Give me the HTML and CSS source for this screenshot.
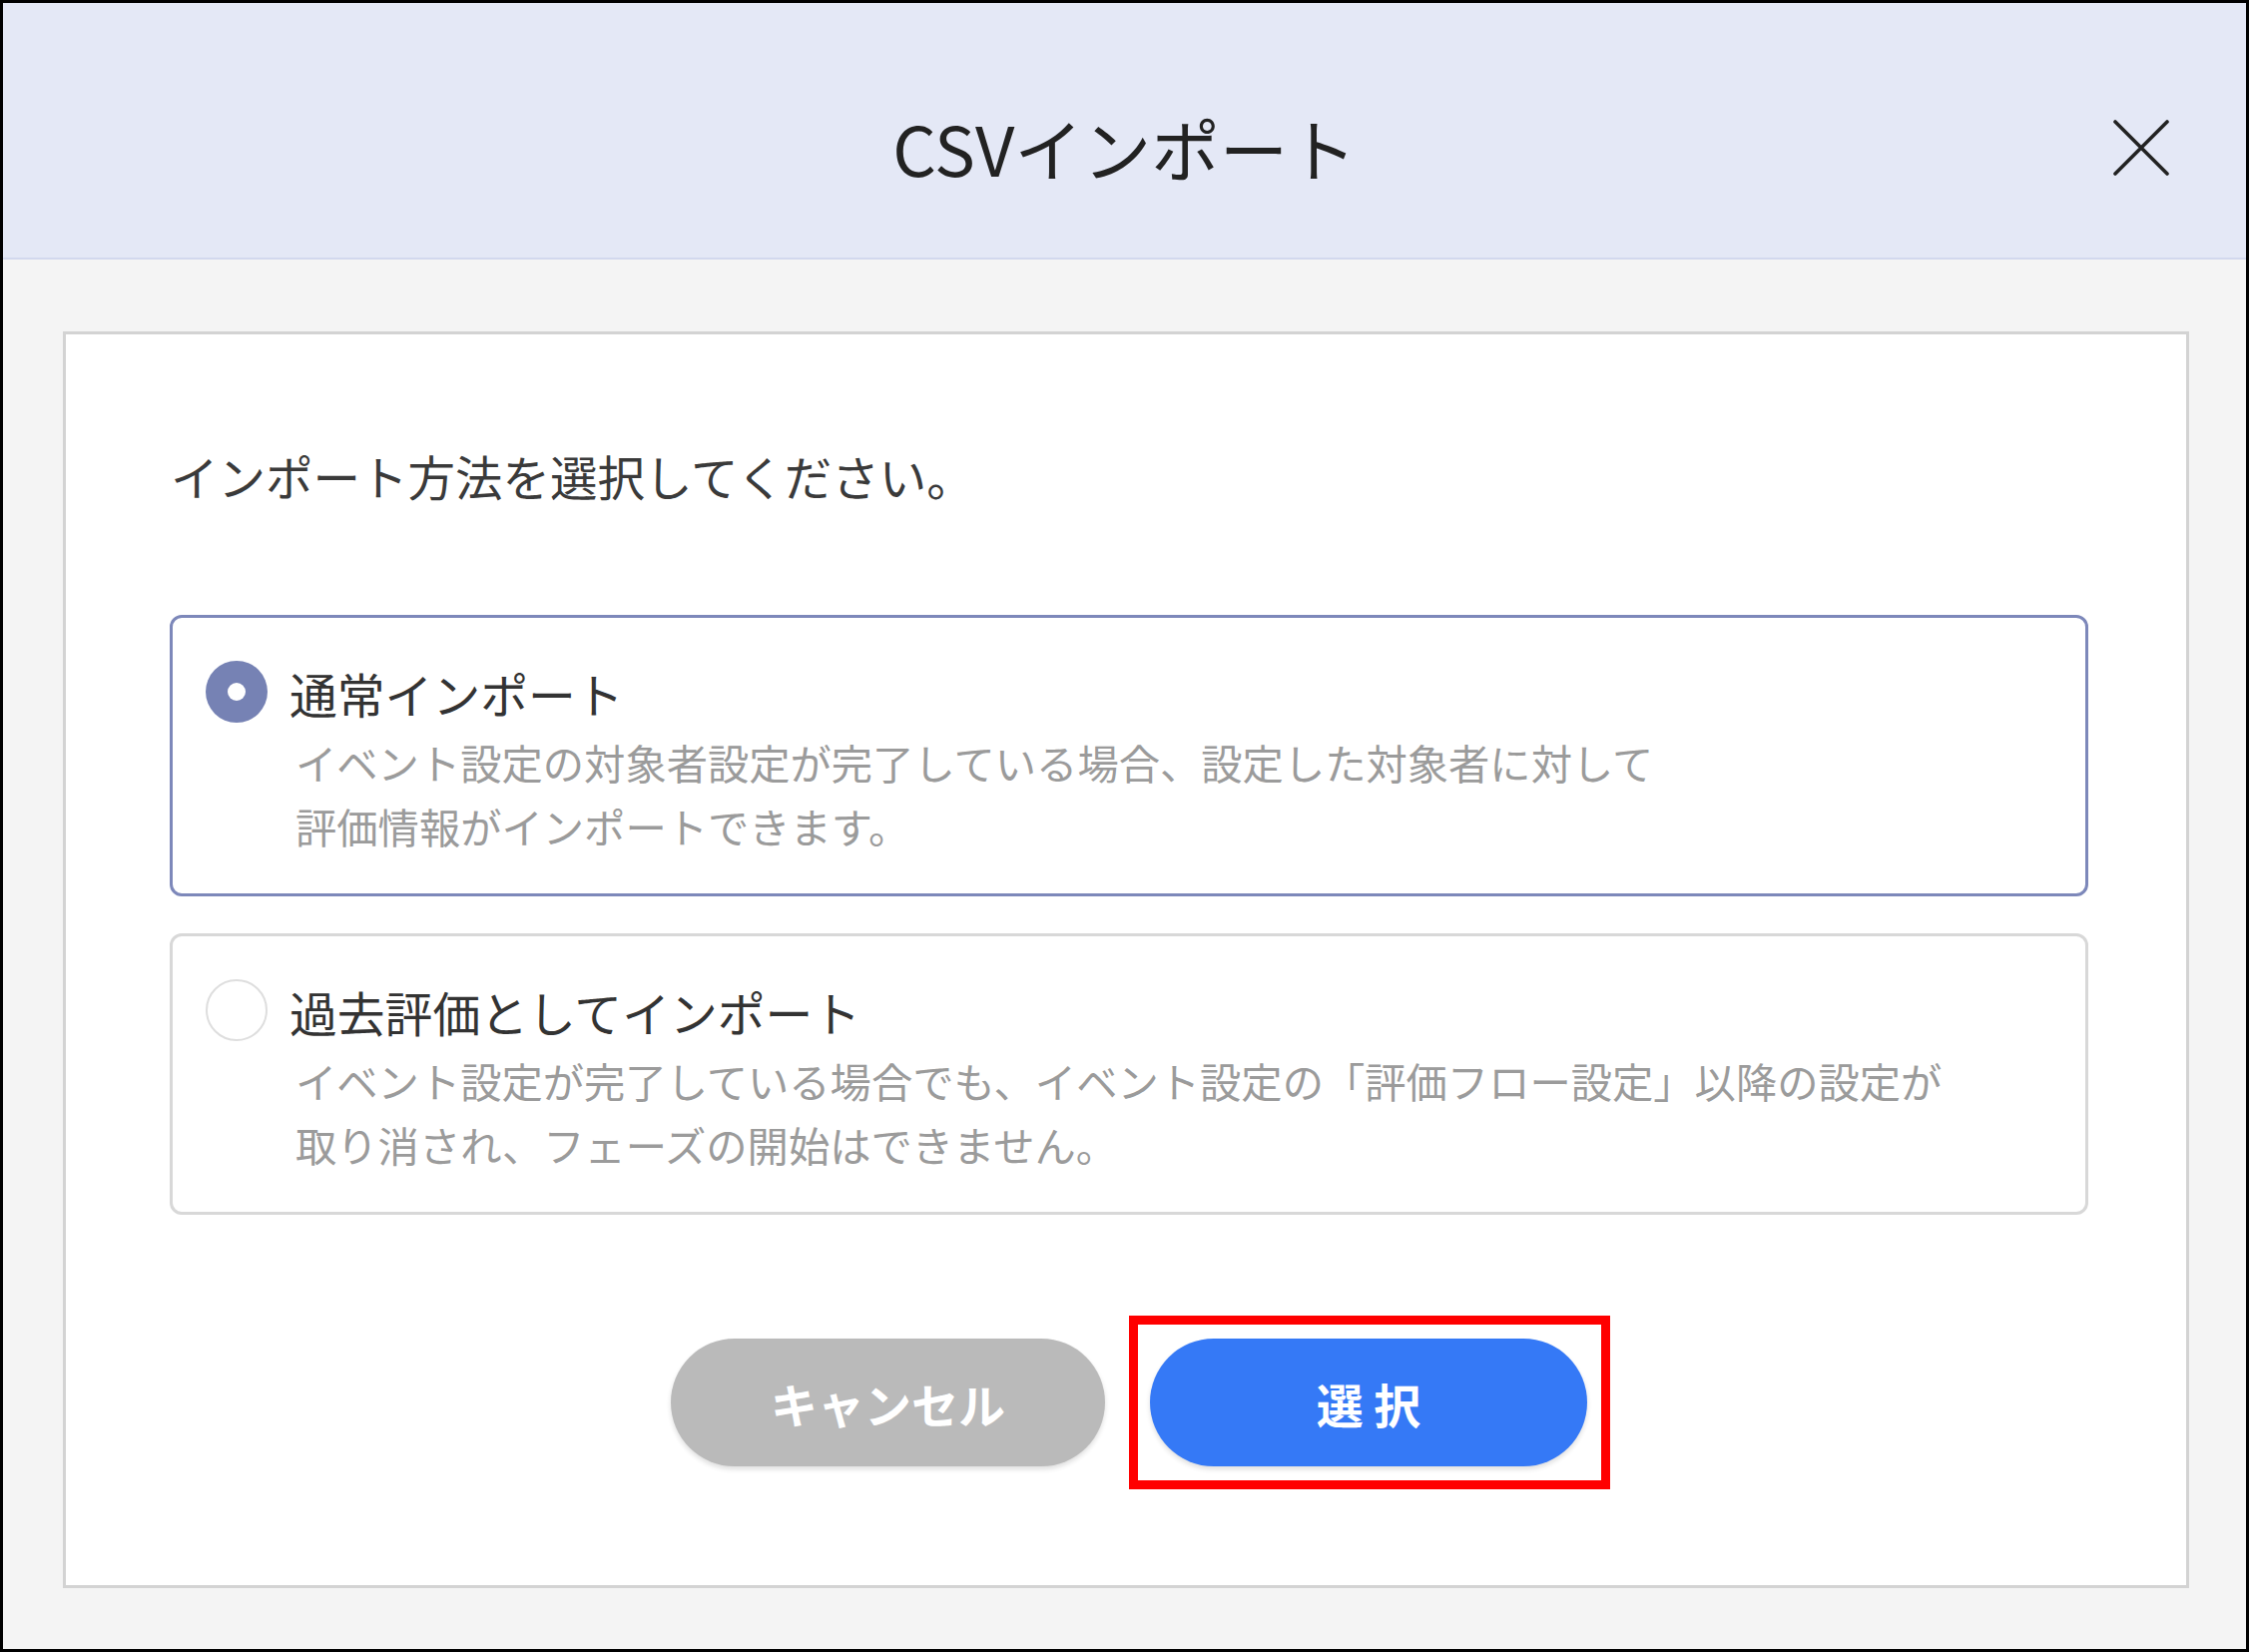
FILE: index.html
```html
<!DOCTYPE html>
<html lang="ja">
<head>
<meta charset="utf-8">
<title>CSVインポート</title>
<link rel="stylesheet" href="styles.css">
</head>
<body>
<div class="dialog">
  <header class="dialog-header">
    <h1 class="dialog-title">CSVインポート</h1>
    <button class="close-btn" aria-label="閉じる">
      <svg viewBox="0 0 56 56" width="56" height="56"><path d="M2 2 L54 54 M54 2 L2 54" stroke="#222" stroke-width="3.6" fill="none" stroke-linecap="round"/></svg>
    </button>
  </header>
  <main class="dialog-body">
    <section class="card">
      <p class="prompt">インポート方法を選択してください。</p>
      <div class="options">
        <label class="option selected">
          <span class="radio checked"></span>
          <span class="option-text">
            <span class="option-label">通常インポート</span>
            <span class="option-desc">イベント設定の対象者設定が完了している場合、設定した対象者に対して<br>評価情報がインポートできます。</span>
          </span>
        </label>
        <label class="option">
          <span class="radio"></span>
          <span class="option-text">
            <span class="option-label">過去評価としてインポート</span>
            <span class="option-desc">イベント設定が完了している場合でも、イベント設定の「評価フロー設定」以降の設定が<br>取り消され、フェーズの開始はできません。</span>
          </span>
        </label>
      </div>
      <div class="actions">
        <button class="btn btn-cancel">キャンセル</button>
        <button class="btn btn-primary">選択</button>
      </div>
    </section>
  </main>
</div>
</body>
</html>
```
FILE: styles.css
```css
* { box-sizing: border-box; }
html, body { margin: 0; padding: 0; }
body {
  font-family: "Noto Sans CJK JP", "Noto Sans", sans-serif;
  background: #ffffff;
}
.dialog {
  width: 2253px;
  height: 1655px;
  border: 3px solid #000;
  display: flex;
  flex-direction: column;
  background: #f4f4f4;
}
.dialog-header {
  height: 257px;
  flex: none;
  background: #e4e8f6;
  border-bottom: 2px solid #d2d8ee;
  display: grid;
  grid-template-columns: 1fr auto 1fr;
  align-items: center;
  padding: 34px 77px 0 77px;
}
.dialog-title {
  grid-column: 2;
  margin: 0;
  font-size: 68.5px;
  font-weight: 400;
  line-height: 1.3;
  color: #222;
  letter-spacing: 0;
}
.close-btn {
  grid-column: 3;
  justify-self: end;
  border: 0;
  background: transparent;
  padding: 0;
  width: 56px;
  height: 56px;
  display: flex;
}
.dialog-body {
  flex: 1;
  display: flex;
  flex-direction: column;
  padding: 72px 57px 61px 60px;
}
.card {
  flex: 1;
  background: #fff;
  border: 3px solid #d3d3d3;
  padding: 107px 98px 0 104px;
  display: flex;
  flex-direction: column;
}
.prompt {
  margin: 0 0 0 1px;
  font-size: 47.5px;
  line-height: 69px;
  color: #3a3a3a;
}
.options {
  margin-top: 105px;
  display: flex;
  flex-direction: column;
  gap: 37px;
}
.option {
  display: flex;
  align-items: flex-start;
  gap: 22px;
  border: 3px solid #d8d8d8;
  border-radius: 12px;
  padding: 42px 30px 36px 33px;
  background: #fff;
}
.option.selected {
  border-color: #7d88ba;
}
.radio {
  flex: none;
  width: 62px;
  height: 62px;
  margin-top: 1px;
  border-radius: 50%;
  border: 2px solid #dedede;
  background: #fff;
  display: flex;
  align-items: center;
  justify-content: center;
}
.radio.checked {
  border: 0;
  background: #7682b4;
}
.radio.checked::after {
  content: "";
  width: 18px;
  height: 18px;
  border-radius: 50%;
  background: #fff;
}
.option-text {
  display: flex;
  flex-direction: column;
}
.option-label {
  font-size: 47.8px;
  line-height: 68px;
  color: #333;
}
.option-desc {
  margin-top: 2px;
  font-size: 41.3px;
  line-height: 64px;
  color: #9b9b9b;
  padding-left: 6px;
}
.actions {
  margin-top: 124px;
  display: flex;
  justify-content: center;
  gap: 45px;
}
.btn {
  height: 128px;
  border: 0;
  border-radius: 64px;
  font-family: "Noto Sans CJK JP", "Noto Sans", sans-serif;
  font-size: 47px;
  font-weight: 700;
  color: #fff;
  box-shadow: 0 3px 5px rgba(0, 0, 0, 0.13);
  padding: 0;
}
.btn-cancel {
  width: 435px;
  background: #bababa;
}
.btn-primary {
  position: relative;
  width: 438px;
  background: #3579f6;
  letter-spacing: 0.22em;
  text-indent: 0.22em;
}
.btn-primary::after {
  content: "";
  position: absolute;
  top: -23px;
  bottom: -23px;
  left: -21px;
  right: -23px;
  border: 9px solid #ff0000;
  pointer-events: none;
}
```
